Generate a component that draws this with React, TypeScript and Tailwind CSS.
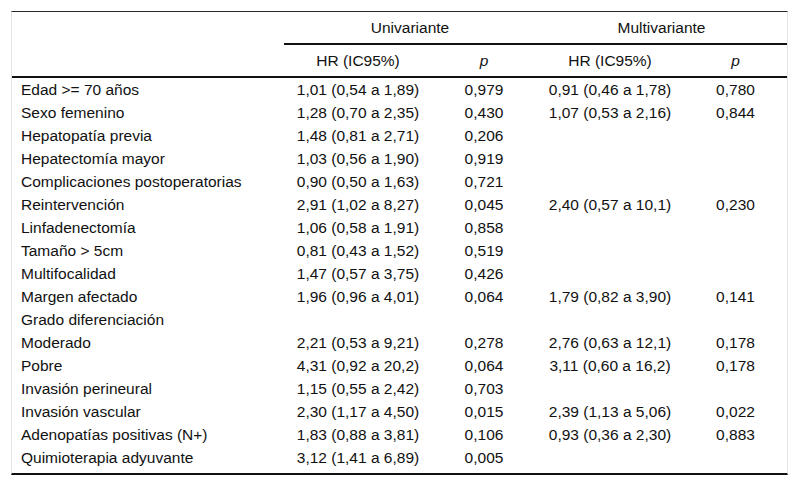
const rows: [string, string?, string?, string?, string?][] = [
  ['Edad >= 70 años', '1,01 (0,54 a 1,89)', '0,979', '0,91 (0,46 a 1,78)', '0,780'],
  ['Sexo femenino', '1,28 (0,70 a 2,35)', '0,430', '1,07 (0,53 a 2,16)', '0,844'],
  ['Hepatopatía previa', '1,48 (0,81 a 2,71)', '0,206'],
  ['Hepatectomía mayor', '1,03 (0,56 a 1,90)', '0,919'],
  ['Complicaciones postoperatorias', '0,90 (0,50 a 1,63)', '0,721'],
  ['Reintervención', '2,91 (1,02 a 8,27)', '0,045', '2,40 (0,57 a 10,1)', '0,230'],
  ['Linfadenectomía', '1,06 (0,58 a 1,91)', '0,858'],
  ['Tamaño > 5cm', '0,81 (0,43 a 1,52)', '0,519'],
  ['Multifocalidad', '1,47 (0,57 a 3,75)', '0,426'],
  ['Margen afectado', '1,96 (0,96 a 4,01)', '0,064', '1,79 (0,82 a 3,90)', '0,141'],
  ['Grado diferenciación'],
  ['Moderado', '2,21 (0,53 a 9,21)', '0,278', '2,76 (0,63 a 12,1)', '0,178'],
  ['Pobre', '4,31 (0,92 a 20,2)', '0,064', '3,11 (0,60 a 16,2)', '0,178'],
  ['Invasión perineural', '1,15 (0,55 a 2,42)', '0,703'],
  ['Invasión vascular', '2,30 (1,17 a 4,50)', '0,015', '2,39 (1,13 a 5,06)', '0,022'],
  ['Adenopatías positivas (N+)', '1,83 (0,88 a 3,81)', '0,106', '0,93 (0,36 a 2,30)', '0,883'],
  ['Quimioterapia adyuvante', '3,12 (1,41 a 6,89)', '0,005'],
];

const cols = 'grid grid-cols-[272px_148px_104px_148px_103px]';

export default function App() {
  return (
    <div className="bg-white p-[11px] text-[15.5px] text-[#111] font-['Liberation_Sans',Arial,sans-serif]">
      <div className="w-[777px] border-t border-t-[#2a2a2a] border-x border-x-[#e4e4e4] border-b-2 border-b-[#111] pb-[4px]">
        {/* group headers */}
        <div className={cols}>
          <div />
          <div className="col-span-2 h-[33px] flex items-center justify-center border-b-2 border-[#111]">
            Univariante
          </div>
          <div className="col-span-2 h-[33px] flex items-center justify-center border-b-2 border-[#111]">
            Multivariante
          </div>
        </div>

        {/* sub headers */}
        <div className={`${cols} h-[33px] items-center border-b-2 border-[#111]`}>
          <div />
          <div className="text-center">HR (IC95%)</div>
          <div className="text-center italic">p</div>
          <div className="text-center">HR (IC95%)</div>
          <div className="text-center italic">p</div>
        </div>

        {rows.map(([label, hr1, p1, hr2, p2]) => (
          <div key={label} className={`${cols} h-[23px] items-center`}>
            <div className="pl-[9px] whitespace-nowrap">{label}</div>
            <div className="text-center">{hr1}</div>
            <div className="text-center">{p1}</div>
            <div className="text-center">{hr2}</div>
            <div className="text-center">{p2}</div>
          </div>
        ))}
      </div>
    </div>
  );
}
